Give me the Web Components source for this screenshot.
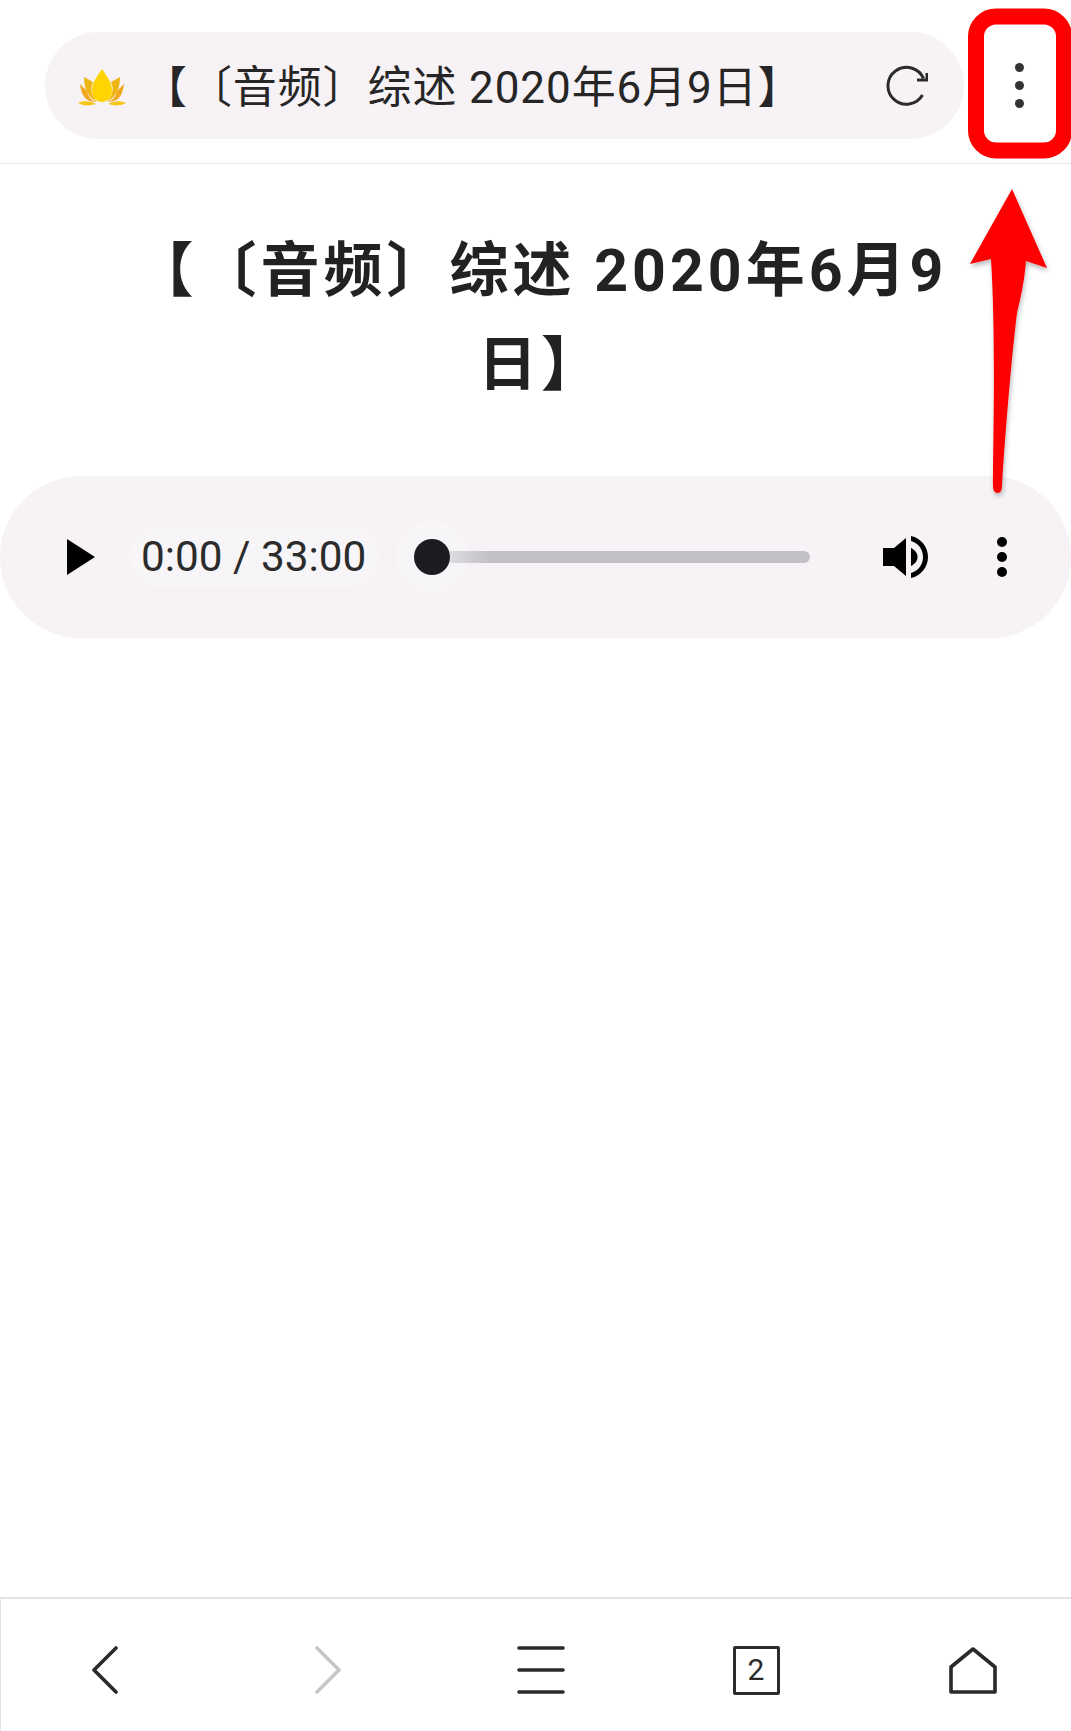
<!DOCTYPE html>
<html lang="zh">
<head>
<meta charset="utf-8">
<style>
html,body{margin:0;padding:0;background:#fff}
body{width:1071px;height:1731px;overflow:hidden;position:relative;font-family:Roboto,"Noto Sans CJK SC",sans-serif;color:#222;text-spacing-trim:space-all;font-feature-settings:"chws" 0,"halt" 0}
</style>
</head>
<body>
<browser-shell>
  <address-bar title-text="【〔音频〕综述 2020年6月9日】"></address-bar>
  <article-title>【〔音频〕综述 2020年6月9日】</article-title>
  <audio-player time="0:00 / 33:00"></audio-player>
  <bottom-nav slot="nav" tabs="2"></bottom-nav>
</browser-shell>
<red-annotation></red-annotation>
<script>
function def(name, html){
  customElements.define(name, class extends HTMLElement{
    connectedCallback(){
      if(this.shadowRoot) return;
      const r=this.attachShadow({mode:'open'});
      r.innerHTML=typeof html==='function'?html(this):html;
    }
  });
}
def('browser-shell',`<style>
:host{display:flex;flex-direction:column;height:1731px}
main{flex:1;display:flex;flex-direction:column;min-height:0}
</style><main><slot></slot></main><slot name="nav"></slot>`);

def('address-bar',h=>`<style>
:host{display:flex;align-items:center;height:163px;border-bottom:1px solid #e6e6e6;padding:0 0 0 45px}
.pill{display:flex;align-items:center;width:919px;height:107px;border-radius:54px;background:#f6f2f6;box-sizing:border-box;padding-left:33px;margin-top:8px}
.lotus{width:48px;height:38px;flex:none;display:block;margin-top:5px}
.t{margin-left:17px;font-size:44px;letter-spacing:.9px;line-height:60px;color:#262626;white-space:nowrap;flex:1;position:relative;top:2px}
.reload{width:44px;height:44px;flex:none;margin-right:36px;display:block}
.more{width:107px;flex:none;display:flex;justify-content:center;margin-top:8px;padding-left:3px;box-sizing:border-box}
.more i{display:block;width:9px;height:9px;border-radius:50%;background:#333;box-shadow:0 18px 0 #333,0 -18px 0 #333}
</style>
<div class="pill">
<svg class="lotus" viewBox="0 0 48 38">
<path fill="#f5c518" d="M0 34c6-3 13-2 18 1-7 2-13 2-18-1zM48 34c-6-3-13-2-18 1 7 2 13 2 18-1z"/>
<path fill="#f2a81c" d="M2 15l7 7c1 6 5 10 10 11-9 0-15-3-17-18zM46 15l-7 7c-1 6-5 10-10 11 9 0 15-3 17-18z"/>
<path fill="#eeb515" d="M6 8l9 5c-3 6-2 13 4 20-9-5-13-13-13-25zM42 8l-9 5c3 6 2 13-4 20 9-5 13-13 13-25z"/>
<path fill="#ffd400" d="M24 0c5 8 10 13 10 21 0 7-4 12-10 12s-10-5-10-12c0-8 5-13 10-21z"/>
</svg>
<span class="t">${h.getAttribute('title-text')}</span>
<svg class="reload" viewBox="0 0 44 44"><path d="M38.5 31A18.5 18.5 0 1 1 39.5 14.5" fill="none" stroke="#2b2b2b" stroke-width="3"/><path d="M33 16H43V9" fill="none" stroke="#2b2b2b" stroke-width="3"/></svg>
</div>
<div class="more"><i></i></div>`);

def('article-title',`<style>
:host{display:block;padding:60px 115px 0 126px;text-align:center;font-size:59px;line-height:94px;font-weight:700;letter-spacing:4px;color:#222}
h1{all:unset;display:block}
</style><h1><slot></slot></h1>`);

def('audio-player',h=>`<style>
:host{display:flex;align-items:center;height:162px;margin-top:64px;border-radius:81px;background:#f6f2f6;flex:none}
.play{width:28px;height:36px;margin-left:67px;flex:none;display:block}
.time{margin-left:34px;height:60px;width:250px;box-sizing:border-box;padding-left:12px;border-radius:30px;background:#f7f5f7;font-size:42.3px;line-height:60px;color:#2b2b2b;white-space:nowrap;flex:none}
.seek{margin-left:17px;width:414px;height:76px;display:flex;align-items:center;flex:none}
.halo{width:72px;height:72px;border-radius:50%;background:#f7f5f7;display:flex;align-items:center;justify-content:center;flex:none}
.thumb{width:36px;height:36px;border-radius:50%;background:#1b1c1f;display:block;position:relative;z-index:1}
.track{flex:none;width:360px;height:12px;border-radius:0 6px 6px 0;margin-left:-18px;background:linear-gradient(90deg,#dcdbde 0,#c2c0c4 40px)}
.vol{width:46px;height:44px;margin-left:73px;flex:none;display:block}
.dots{width:10px;margin-left:68px;display:block;flex:none}
</style>
<svg class="play" viewBox="0 0 28 36"><path d="M0 0L28 18L0 36Z" fill="#000"/></svg>
<span class="time">${h.getAttribute('time')}</span>
<div class="seek"><span class="halo"><span class="thumb"></span></span><span class="track"></span></div>
<svg class="vol" viewBox="0 0 46 44"><path d="M0 13H11L23 3V41L11 31H0Z" fill="#000"/><path d="M28 13C32 15 34.5 18 34.5 22C34.5 26 32 29 28 31Z" fill="#000"/><path d="M28 1C38 3 45 12 45 22C45 32 38 41 28 43V38C35 36 40 30 40 22C40 14 35 8 28 6Z" fill="#000"/></svg>
<svg class="dots" viewBox="0 0 10 40" height="40"><circle cx="5" cy="5" r="5"/><circle cx="5" cy="20" r="5"/><circle cx="5" cy="35" r="5"/></svg>`);

def('bottom-nav',h=>`<style>
:host{display:grid;grid-template-columns:208px 238px 188px 242px 192px;align-items:center;justify-items:center;height:134px;box-sizing:border-box;border-top:2px solid #e3e3e3;border-left:1px solid #e3e3e3;flex:none;padding-top:10px}
svg{display:block;fill:none;stroke:#2a2a2a;stroke-width:3.6;stroke-linecap:round;stroke-linejoin:round}
.tab{width:47px;height:49px;box-sizing:border-box;border:3.5px solid #2c2c2c;border-radius:2px;font:400 30px/41px Roboto,sans-serif;text-align:center;color:#2a2a2a}
</style>
<svg width="26" height="48" viewBox="0 0 26 48"><path d="M24 2L2 24L24 46"/></svg>
<svg width="26" height="48" viewBox="0 0 26 48" style="stroke:#c6c6c6"><path d="M2 2L24 24L2 46"/></svg>
<svg width="48" height="48" viewBox="0 0 48 48"><path d="M2 2H46M2 24H46M2 46H46"/></svg>
<div class="tab">${h.getAttribute('tabs')}</div>
<svg width="48" height="48" viewBox="0 0 48 48"><path d="M2 21L24 3L46 21V46H2Z"/></svg>`);

def('red-annotation',`<style>
:host{position:absolute;left:0;top:0;width:1071px;height:500px;pointer-events:none}
svg{display:block;overflow:hidden}
</style>
<svg width="1071" height="500" viewBox="0 0 1071 500">
<defs><filter id="s" x="-30%" y="-5%" width="160%" height="110%"><feDropShadow dx="1" dy="3" stdDeviation="2.5" flood-color="#000" flood-opacity=".28"/></filter></defs>
<rect x="976" y="16.5" width="88" height="134" rx="20" fill="none" stroke="#fe0000" stroke-width="16"/>
<path filter="url(#s)" fill="#fe0000" d="M1012 189L1047 268L1026 261C1024 285 1020 300 1017 313C1013 345 1006 420 1002 486Q1002 493 997.5 493Q993 493 993 486C993 440 996 340 991 259L970 264Z"/>
</svg>`);
</script>
</body>
</html>
